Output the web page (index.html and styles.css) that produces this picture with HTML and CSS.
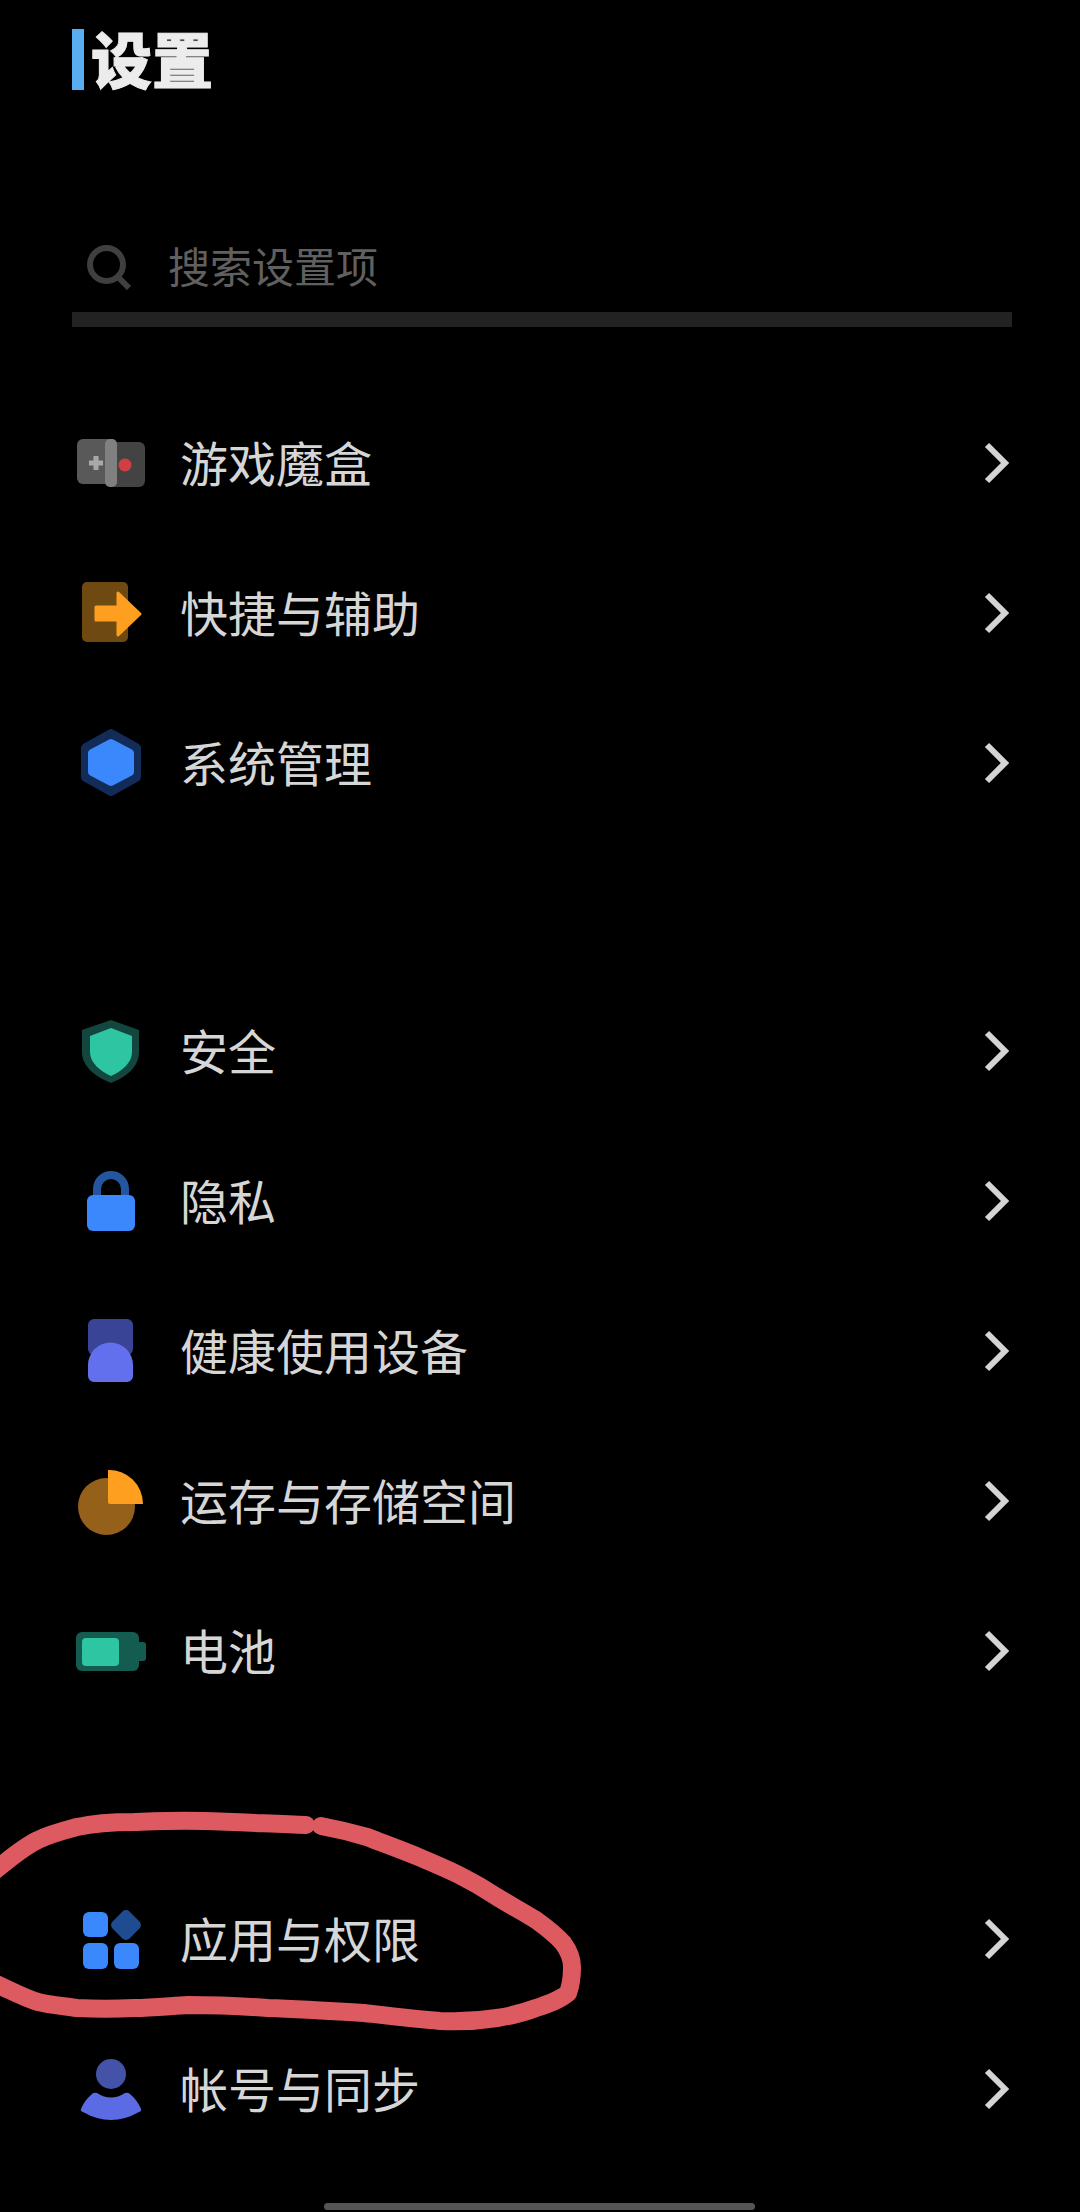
FILE: index.html
```html
<!DOCTYPE html>
<html lang="zh-CN">
<head>
    <meta charset="UTF-8">
    <meta name="viewport" content="width=device-width, initial-scale=1.0">
    <title>设置</title>
    <link rel="stylesheet" href="styles.css">
</head>
<body>
    <div class="page">
        <header class="header">
            <span class="title-mark"></span>
            <h1 class="title">设置</h1>
        </header>

        <div class="search">
            <svg class="search-icon" viewBox="0 0 46 46">
                <circle cx="20.5" cy="20.5" r="16.5" fill="none" stroke="#3f3f3f" stroke-width="6"/>
                <path d="M31 32 L43 44" fill="none" stroke="#3f3f3f" stroke-width="6"/>
            </svg>
            <span class="search-text">搜索设置项</span>
        </div>
        <div class="search-line"></div>

        <ul class="group group-first">
            <li class="row">
                <svg class="icon" viewBox="0 0 80 80">
                    <rect x="7" y="16" width="40" height="45" rx="6" fill="#59595a"/>
                    <rect x="35" y="19" width="40" height="45" rx="6" fill="#434344"/>
                    <rect x="35" y="16" width="12" height="48" rx="5" fill="#808081"/>
                    <path d="M26 33 v14 M19 40 h14" fill="none" stroke="#a9a9aa" stroke-width="5"/>
                    <circle cx="55" cy="42" r="6.5" fill="#d23f42"/>
                </svg>
                <span class="label">游戏魔盒</span>
                <svg class="arrow" viewBox="0 0 28 44"><path d="M5 4 L23 22 L5 40" fill="none" stroke="#d4d4d4" stroke-width="6"/></svg>
            </li>
            <li class="row">
                <svg class="icon" viewBox="0 0 80 80">
                    <rect x="12" y="9" width="46" height="60" rx="5" fill="#6e4a12"/>
                    <path d="M26 34 H48 V20 L70 41 L48 62 V47 H26 Z" fill="#ff9f1f" stroke="#ff9f1f" stroke-width="3" stroke-linejoin="round"/>
                </svg>
                <span class="label">快捷与辅助</span>
                <svg class="arrow" viewBox="0 0 28 44"><path d="M5 4 L23 22 L5 40" fill="none" stroke="#d4d4d4" stroke-width="6"/></svg>
            </li>
            <li class="row">
                <svg class="icon" viewBox="0 0 80 80">
                    <path d="M41 11 L66 25 V54 L41 68 L16 54 V25 Z" fill="#122b58" stroke="#122b58" stroke-width="10" stroke-linejoin="round"/>
                    <path d="M41 20 L60 30 V49 L41 59 L22 49 V30 Z" fill="#3a88fb" stroke="#3a88fb" stroke-width="8" stroke-linejoin="round"/>
                </svg>
                <span class="label">系统管理</span>
                <svg class="arrow" viewBox="0 0 28 44"><path d="M5 4 L23 22 L5 40" fill="none" stroke="#d4d4d4" stroke-width="6"/></svg>
            </li>
        </ul>

        <ul class="group group-second">
            <li class="row">
                <svg class="icon" viewBox="0 0 80 80">
                    <path d="M41 9 L69 19 V41 C69 56 56 66 41 72 C26 66 12 56 12 41 V19 Z" fill="#12463f"/>
                    <path d="M41 17 L62 25 V41 C62 52 52 60 41 65 C30 60 20 52 20 41 V25 Z" fill="#2ec5a3"/>
                </svg>
                <span class="label">安全</span>
                <svg class="arrow" viewBox="0 0 28 44"><path d="M5 4 L23 22 L5 40" fill="none" stroke="#d4d4d4" stroke-width="6"/></svg>
            </li>
            <li class="row">
                <svg class="icon" viewBox="0 0 80 80">
                    <path d="M27 38 V28 a14 14 0 0 1 28 0 V38" fill="none" stroke="#24569f" stroke-width="8"/>
                    <rect x="17" y="34" width="48" height="36" rx="6" fill="#3a88fb"/>
                </svg>
                <span class="label">隐私</span>
                <svg class="arrow" viewBox="0 0 28 44"><path d="M5 4 L23 22 L5 40" fill="none" stroke="#d4d4d4" stroke-width="6"/></svg>
            </li>
            <li class="row">
                <svg class="icon" viewBox="0 0 80 80">
                    <rect x="18" y="8" width="45" height="36" rx="6" fill="#3a4496"/>
                    <path d="M18 65 V54 a22.5 22.5 0 0 1 45 0 V65 a6 6 0 0 1 -6 6 H24 a6 6 0 0 1 -6-6 Z" fill="#6270ee"/>
                </svg>
                <span class="label">健康使用设备</span>
                <svg class="arrow" viewBox="0 0 28 44"><path d="M5 4 L23 22 L5 40" fill="none" stroke="#d4d4d4" stroke-width="6"/></svg>
            </li>
            <li class="row">
                <svg class="icon" viewBox="0 0 80 80">
                    <circle cx="36.5" cy="45.5" r="28.5" fill="#95601a"/>
                    <path d="M38 9 A34 34 0 0 1 73 43 H40 a2 2 0 0 1 -2-2 Z" fill="#ff9f1f"/>
                </svg>
                <span class="label">运存与存储空间</span>
                <svg class="arrow" viewBox="0 0 28 44"><path d="M5 4 L23 22 L5 40" fill="none" stroke="#d4d4d4" stroke-width="6"/></svg>
            </li>
            <li class="row">
                <svg class="icon" viewBox="0 0 80 80">
                    <rect x="6" y="21" width="63" height="39" rx="6" fill="#155c50"/>
                    <path d="M69 31 h4 a3 3 0 0 1 3 3 v13 a3 3 0 0 1 -3 3 h-4 Z" fill="#155c50"/>
                    <rect x="12" y="27" width="37" height="28" rx="4" fill="#2ec5a3"/>
                </svg>
                <span class="label">电池</span>
                <svg class="arrow" viewBox="0 0 28 44"><path d="M5 4 L23 22 L5 40" fill="none" stroke="#d4d4d4" stroke-width="6"/></svg>
            </li>
        </ul>

        <ul class="group group-third">
            <li class="row">
                <svg class="icon" viewBox="0 0 80 80">
                    <rect x="13" y="13" width="25" height="25" rx="6" fill="#3a88fb"/>
                    <rect x="13" y="44" width="25" height="26" rx="6" fill="#3a88fb"/>
                    <rect x="44" y="44" width="25" height="26" rx="6" fill="#3a88fb"/>
                    <rect x="44" y="14" width="24" height="24" rx="5" fill="#1f4c90" transform="rotate(45 56 26)"/>
                </svg>
                <span class="label">应用与权限</span>
                <svg class="arrow" viewBox="0 0 28 44"><path d="M5 4 L23 22 L5 40" fill="none" stroke="#d4d4d4" stroke-width="6"/></svg>
            </li>
            <li class="row">
                <svg class="icon" viewBox="0 0 80 80">
                    <circle cx="41" cy="25" r="15" fill="#4453a8"/>
                    <path d="M27 44 Q41 53 55 44 Q58 43 60 45 Q68 52 71 60 Q72 62 69 63 Q41 79 13 63 Q10 62 11 60 Q14 52 22 45 Q24 43 27 44 Z" fill="#5b6be4"/>
                </svg>
                <span class="label">帐号与同步</span>
                <svg class="arrow" viewBox="0 0 28 44"><path d="M5 4 L23 22 L5 40" fill="none" stroke="#d4d4d4" stroke-width="6"/></svg>
            </li>
        </ul>

        <div class="home-bar"></div>

        <!-- red marker drawn over the screenshot -->
        <svg class="marker" viewBox="0 0 1080 2212">
            <path d="M-8 1873 C10 1858 25 1846 38 1840 C50 1834 62 1831 77 1827 C95 1823 115 1822 134 1822 C160 1821 180 1820 203 1821 C240 1822 275 1824 306 1825"/>
            <path d="M321 1826 C337 1829 350 1832 367 1837 C385 1844 402 1850 421 1858 C435 1864 447 1869 459 1875 C473 1882 485 1889 497 1897 C510 1905 523 1912 536 1920 C547 1928 556 1935 563 1943 C569 1951 572 1958 572 1967 C572 1977 571 1985 568 1993 C560 2000 548 2004 536 2008 C523 2013 510 2016 497 2018 C478 2021 460 2022 440 2021 C415 2019 390 2016 364 2013 C332 2011 300 2009 268 2008 C240 2006 214 2005 188 2005 C170 2006 152 2008 134 2008 C115 2009 96 2009 77 2008 C64 2006 50 2005 38 2002 C24 1998 12 1991 -8 1982"/>
        </svg>
    </div>
</body>
</html>
```
FILE: styles.css
```css
* {
    box-sizing: border-box;
}
html, body {
    margin: 0;
    padding: 0;
    background-color: #000;
}
.page {
    position: relative;
    width: 1080px;
    height: 2212px;
    overflow: hidden;
    font-family: "Noto Sans CJK SC", "Noto Sans", sans-serif;
    background-color: #000;
}
.header {
    display: flex;
    align-items: center;
    height: 61px;
    margin-top: 29px;
    padding-left: 72px;
}
.title-mark {
    width: 12px;
    height: 61px;
    background-color: #58aef1;
}
.title {
    margin: -4px 0 0 7px;
    font-size: 61px;
    font-weight: 900;
    line-height: 61px;
    color: #ececec;
    -webkit-text-stroke: 1px #ececec;
}
.search {
    display: flex;
    align-items: center;
    height: 46px;
    margin-top: 154px;
    padding-left: 86px;
}
.search-icon {
    width: 46px;
    height: 46px;
}
.search-text {
    margin: -4px 0 0 36px;
    font-size: 42px;
    line-height: 46px;
    color: #606060;
}
.search-line {
    height: 15px;
    margin: 22px 68px 0 72px;
    background-color: #222;
}
.group {
    list-style: none;
    margin: 0;
    padding: 0;
}
.group-first {
    margin-top: 61px;
}
.group-second {
    margin-top: 138px;
}
.group-third {
    margin-top: 138px;
}
.row {
    display: flex;
    align-items: center;
    height: 150px;
    padding: 0 70px;
}
.icon {
    flex: none;
    width: 80px;
    height: 80px;
}
.label {
    flex: 1;
    margin: 0 0 5px 30px;
    font-size: 48px;
    line-height: 60px;
    color: #d6d6d6;
}
.arrow {
    flex: none;
    width: 28px;
    height: 44px;
}
.home-bar {
    width: 431px;
    height: 7px;
    margin: 39px 0 0 324px;
    border-radius: 4px;
    background-color: #555;
}
.marker {
    position: absolute;
    left: 0;
    top: 0;
    width: 1080px;
    height: 2212px;
    fill: none;
    stroke: #dc5a60;
    stroke-width: 18;
    stroke-linecap: round;
    stroke-linejoin: round;
}
```
